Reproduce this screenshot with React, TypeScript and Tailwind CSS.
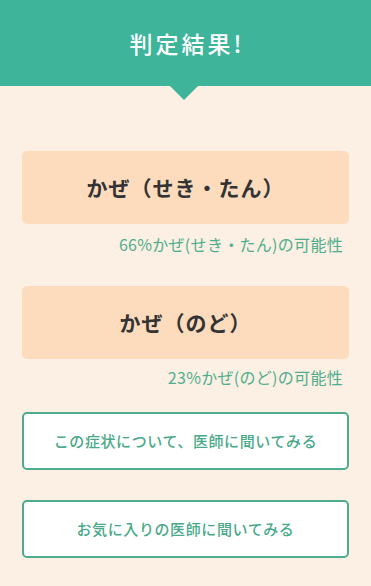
import React from 'react';

const results = [
  { name: 'かぜ（せき・たん）', note: '66%かぜ(せき・たん)の可能性' },
  { name: 'かぜ（のど）', note: '23%かぜ(のど)の可能性' },
];

const actions = ['この症状について、医師に聞いてみる', 'お気に入りの医師に聞いてみる'];

export default function App() {
  return (
    <div
      className="min-h-screen bg-[#fcefe3]"
      style={{ fontFamily: '"Noto Sans CJK JP", "Noto Sans", sans-serif' }}
    >
      {/* Header */}
      <header className="relative h-[86px] bg-[#3eb59b] flex items-center justify-center">
        <h1 className="text-white text-[23px] font-medium tracking-[3px] pl-[3px]">判定結果!</h1>
        <div className="absolute left-[170px] top-[86px] w-0 h-0 border-l-[14.5px] border-r-[14.5px] border-t-[14px] border-l-transparent border-r-transparent border-t-[#3eb59b]" />
      </header>

      <main className="px-[22px] pt-[65px] pb-8">
        {results.map((r, i) => (
          <div key={r.name} className={i === 0 ? '' : 'mt-[30px]'}>
            <div className="h-[73px] rounded-[5px] bg-[#fddcbe] flex items-center justify-center">
              <span className="text-[21px] font-bold tracking-[1px] text-[#333333]">{r.name}</span>
            </div>
            <p
              className={`text-right pr-[6px] text-[16px] tracking-[0.3px] leading-6 text-[#4fae8e] ${
                i === 0 ? 'mt-[8px]' : 'mt-[6px]'
              }`}
            >
              {r.note}
            </p>
          </div>
        ))}

        <div className="mt-[23px] flex flex-col gap-[30px]">
          {actions.map((a) => (
            <button
              key={a}
              className="h-[58px] w-full rounded-[5px] border-2 border-[#4eab8e] bg-white text-[15px] font-medium tracking-[0.6px] text-[#4aa98a]"
            >
              {a}
            </button>
          ))}
        </div>
      </main>
    </div>
  );
}
